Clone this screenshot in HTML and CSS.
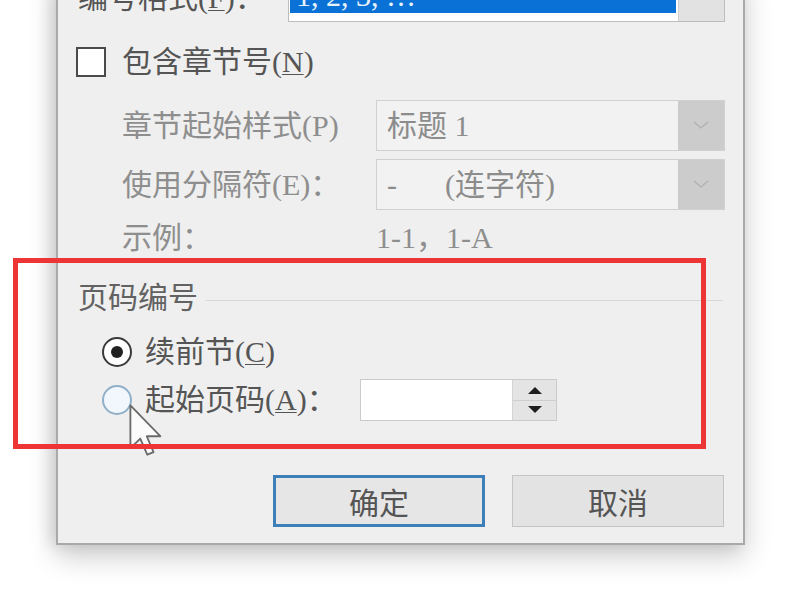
FILE: index.html
```html
<!DOCTYPE html>
<html lang="zh-CN">
<head>
<meta charset="utf-8">
<title>页码格式</title>
<link rel="stylesheet" href="styles.css">
</head>
<body>
<div class="page">
  <div class="dialog">
    <div class="row-top">
      <span class="lbl dark">编号格式(<u>F</u>)：</span>
      <div class="combo focus">
        <div class="sel">1, 2, 3, …</div>
        <div class="arrow"><svg width="12" height="8" viewBox="0 0 12 8"><path d="M1 1 L6 6 L11 1 Z" fill="#333"/></svg></div>
      </div>
    </div>

    <div class="row-check">
      <span class="checkbox"></span>
      <span class="lbl dark">包含章节号(<u>N</u>)</span>
    </div>

    <div class="opts">
      <span class="lbl dis">章节起始样式(P)</span>
      <div class="combo dis-combo">
        <div class="val">标题 <span class="lat">1</span></div>
        <div class="arrow gray"><svg width="16" height="9" viewBox="0 0 16 9"><path d="M1 1 L8 7 L15 1" fill="none" stroke="#b0b0b0" stroke-width="1.2"/></svg></div>
      </div>
      <span class="lbl dis">使用分隔符(E)：</span>
      <div class="combo dis-combo">
        <div class="val"><span class="lat">-</span><span class="gap"></span>(连字符)</div>
        <div class="arrow gray"><svg width="16" height="9" viewBox="0 0 16 9"><path d="M1 1 L8 7 L15 1" fill="none" stroke="#b0b0b0" stroke-width="1.2"/></svg></div>
      </div>
      <span class="lbl dis ex">示例：</span>
      <span class="lbl dis ex lat">1-1，1-A</span>
    </div>

    <div class="group-head">
      <span class="lbl mid">页码编号</span>
    </div>

    <div class="radio-row first">
      <span class="radio on"></span>
      <span class="lbl dark">续前节(<u>C</u>)</span>
    </div>
    <div class="radio-row second">
      <span class="radio hover"></span>
      <span class="lbl dark start-lbl">起始页码(<u>A</u>)：</span>
      <div class="spin">
        <div class="spin-input"></div>
        <div class="spin-btns">
          <div class="sb"><svg width="18" height="10" viewBox="0 0 18 10"><path d="M2 9 L9 2 L16 9 Z" fill="#1e1e1e"/></svg></div>
          <div class="sb"><svg width="18" height="10" viewBox="0 0 18 10"><path d="M2 1 L9 8 L16 1 Z" fill="#1e1e1e"/></svg></div>
        </div>
      </div>
    </div>

    <div class="buttons">
      <div class="btn ok">确定</div>
      <div class="btn">取消</div>
    </div>
  </div>

  <svg class="cursor" width="34" height="52" viewBox="0 0 13 20">
    <path d="M0.5 0.5 L0.5 17 L4.3 13.3 L7 19.5 L9.4 18.5 L6.8 12.4 L12 12.4 Z" fill="#fbfbfb" stroke="#6a6a6a" stroke-width="0.7" stroke-linejoin="round"/>
  </svg>
  <div class="highlight"></div>
</div>
</body>
</html>
```

FILE: styles.css
```css
html, body {
  margin: 0;
  padding: 0;
  background: #ffffff;
  overflow: hidden;
}
body {
  width: 800px;
  height: 589px;
  font-family: "Liberation Serif", "Noto Sans CJK SC", serif;
}
.page {
  position: relative;
  width: 800px;
  height: 589px;
  overflow: hidden;
}
.dialog {
  margin: -28px 0 0 56px;
  width: 689px;
  box-sizing: border-box;
  background: #efefef;
  border: 2px solid #a9a9a9;
  border-top: none;
  padding: 0 18px 16px 20px;
  box-shadow: 0 12px 26px rgba(0,0,0,0.20), -6px 0 14px rgba(0,0,0,0.10);
}
.lbl {
  font-size: 30px;
  line-height: 30px;
  white-space: nowrap;
}
.lbl u {
  text-decoration-thickness: 1px;
  text-underline-offset: 2px;
}
.dark { color: #555; }
.mid { color: #626262; }
.dis { color: #8e8e8e; }
.lat { font-family: "Liberation Serif", serif; }

.row-top {
  display: flex;
  align-items: center;
  height: 50px;
}
.row-top .lbl { width: 210px; margin-top: 2px; }
.combo {
  display: flex;
  box-sizing: border-box;
  border: 1px solid #c8c8c8;
}
.combo.focus {
  width: 437px;
  height: 50px;
  background: #fff;
  border-color: #bdbdbd;
}
.sel {
  flex: 1;
  margin: 8px 2px 8px 1px;
  background: #0a72d6;
  color: #e9f2fb;
  font-size: 30px;
  line-height: 30px;
  padding: 0 6px;
  overflow: hidden;
}
.arrow {
  width: 46px;
  display: flex;
  align-items: center;
  justify-content: center;
  background: #e2e2e2;
  border-left: 1px solid #cfcfcf;
}
.combo.focus .arrow { align-items: flex-start; padding-top: 20px; box-sizing: border-box; }
.arrow.gray {
  background: #cccccc;
  border-left: none;
}

.row-check {
  display: flex;
  align-items: center;
  margin-top: 25px;
  height: 30px;
}
.checkbox {
  margin-left: -2px;
  margin-right: 16px;
  background: #fff;
  border: 2px solid #4a4a4a;
  box-sizing: border-box;
  width: 30px;
  height: 30px;
}

.opts {
  display: grid;
  grid-template-columns: 254px 349px;
  grid-template-rows: 51px 51px 30px;
  row-gap: 8px;
  padding-left: 44px;
  margin-top: 23px;
  align-items: center;
}
.dis-combo {
  height: 51px;
  background: #f2f2f2;
  border-color: #d0d0d0;
}
.dis-combo .val {
  flex: 1;
  padding-left: 10px;
  font-size: 30px;
  line-height: 49px;
  color: #8c8c8c;
  white-space: nowrap;
}
.dis-combo .val .lat { margin-left: 10px; }
.dis-combo .val .lat:first-child { margin-left: 0; }
.gap { display: inline-block; width: 48px; }
.ex { margin-top: 10px; }

.group-head {
  display: flex;
  align-items: center;
  margin-top: 35px;
  height: 30px;
}
.group-head::after {
  content: "";
  flex: 1;
  height: 1px;
  margin-left: 8px;
  margin-right: 2px;
  margin-top: 4px;
  background: #d6d6d6;
}

.radio-row {
  display: flex;
  align-items: center;
  padding-left: 24px;
}
.radio-row.first { margin-top: 24px; height: 30px; }
.radio-row.second { margin-top: 12px; height: 42px; }
.radio {
  width: 30px;
  height: 30px;
  border-radius: 50%;
  box-sizing: border-box;
  margin-right: 13px;
  position: relative;
}
.radio.on {
  border: 2px solid #3a3a3a;
  background: #fff;
}
.radio.on::after {
  content: "";
  position: absolute;
  left: 7px;
  top: 7px;
  width: 12px;
  height: 12px;
  border-radius: 50%;
  background: #222;
}
.radio.hover {
  border: 2px solid #8fb0c8;
  background: #f1f7fc;
}
.start-lbl { width: 215px; }
.spin {
  display: flex;
  height: 42px;
  border: 1px solid #cbcbcb;
  box-sizing: border-box;
}
.spin-input {
  width: 151px;
  background: #fff;
  border-right: 1px solid #d4d4d4;
}
.spin-btns {
  width: 43px;
  display: flex;
  flex-direction: column;
  background: #e4e4e4;
}
.sb {
  flex: 1;
  display: flex;
  align-items: center;
  justify-content: center;
}
.sb + .sb { border-top: 1px solid #cfcfcf; }

.buttons {
  display: flex;
  justify-content: flex-end;
  gap: 27px;
  margin-top: 54px;
  margin-right: 1px;
}
.btn {
  width: 212px;
  height: 52px;
  box-sizing: border-box;
  background: #e3e3e3;
  border: 1px solid #c4c4c4;
  display: flex;
  align-items: center;
  justify-content: center;
  font-size: 30px;
  color: #555;
}
.btn.ok {
  border: 3px solid #3d7fb8;
  background: #e6e6e6;
}

.cursor {
  position: absolute;
  left: 129px;
  top: 404px;
}
.highlight {
  position: absolute;
  left: 13px;
  top: 258px;
  width: 693px;
  height: 191px;
  box-sizing: border-box;
  border: 5px solid #ee3535;
}
```
